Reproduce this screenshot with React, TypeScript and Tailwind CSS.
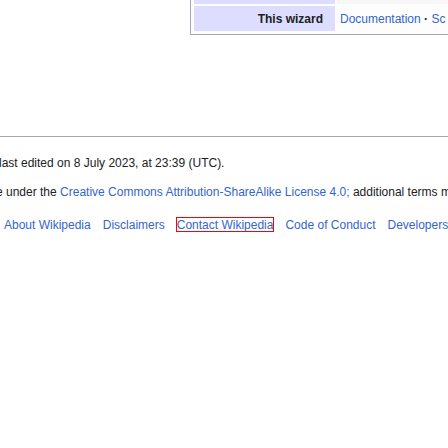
const link = "text-[#3366cc] hover:underline";

const footerLinks = ["About Wikipedia", "Disclaimers", "Contact Wikipedia", "Code of Conduct", "Developers"];

export default function App() {
  return (
    <div className="min-h-screen overflow-hidden bg-white font-['Liberation_Sans',Arial,sans-serif] text-xs text-[#202122]">
      <div className="overflow-hidden pl-[190px]">
        <div className="border-b border-l border-[#a2a9b1] bg-[#fdfdfd] pb-[3px] pl-[3px]">
          <table className="w-full table-fixed border-collapse leading-4">
            <tbody>
              <tr className="h-1">
                <td className="w-[141px] bg-[#ddddff] p-0" />
                <td className="w-0.5 p-0" />
                <td className="bg-[#f7f7f7] p-0" />
              </tr>
              <tr className="h-0.5">
                <td colSpan={3} className="p-0" />
              </tr>
              <tr className="h-[25px]">
                <th scope="row" className="bg-[#ddddff] py-0 pr-3 text-right font-bold">This wizard</th>
                <td className="p-0" />
                <td className="whitespace-nowrap py-0 pl-[3px]">
                  <a href="#documentation" className={link}>Documentation</a>
                  <b> · </b>
                  <a href="#scripts" className={link}>Sc</a>
                </td>
              </tr>
            </tbody>
          </table>
        </div>
      </div>
      <footer className="mt-[101px] border-t border-[#a2a9b1] pt-[18px] leading-4 whitespace-nowrap">
        <p className="-ml-px">last edited on 8 July 2023, at 23:39 (UTC).</p>
        <p className="mt-[13px] -ml-1">
          e under the <a href="#license" className={link}>Creative Commons Attribution-ShareAlike License 4.0;</a> additional terms m
        </p>
        <ul className="mt-[18px] flex gap-3 pl-1 leading-3">
          {footerLinks.map((name) => (
            <li key={name}>
              <a
                href="#footer"
                className={
                  name === "Contact Wikipedia"
                    ? "block pt-px text-[#3366cc] outline outline-1 outline-[#ff0000]"
                    : "block pt-px text-[#3366cc] hover:underline"
                }
              >
                {name}
              </a>
            </li>
          ))}
        </ul>
      </footer>
    </div>
  );
}
